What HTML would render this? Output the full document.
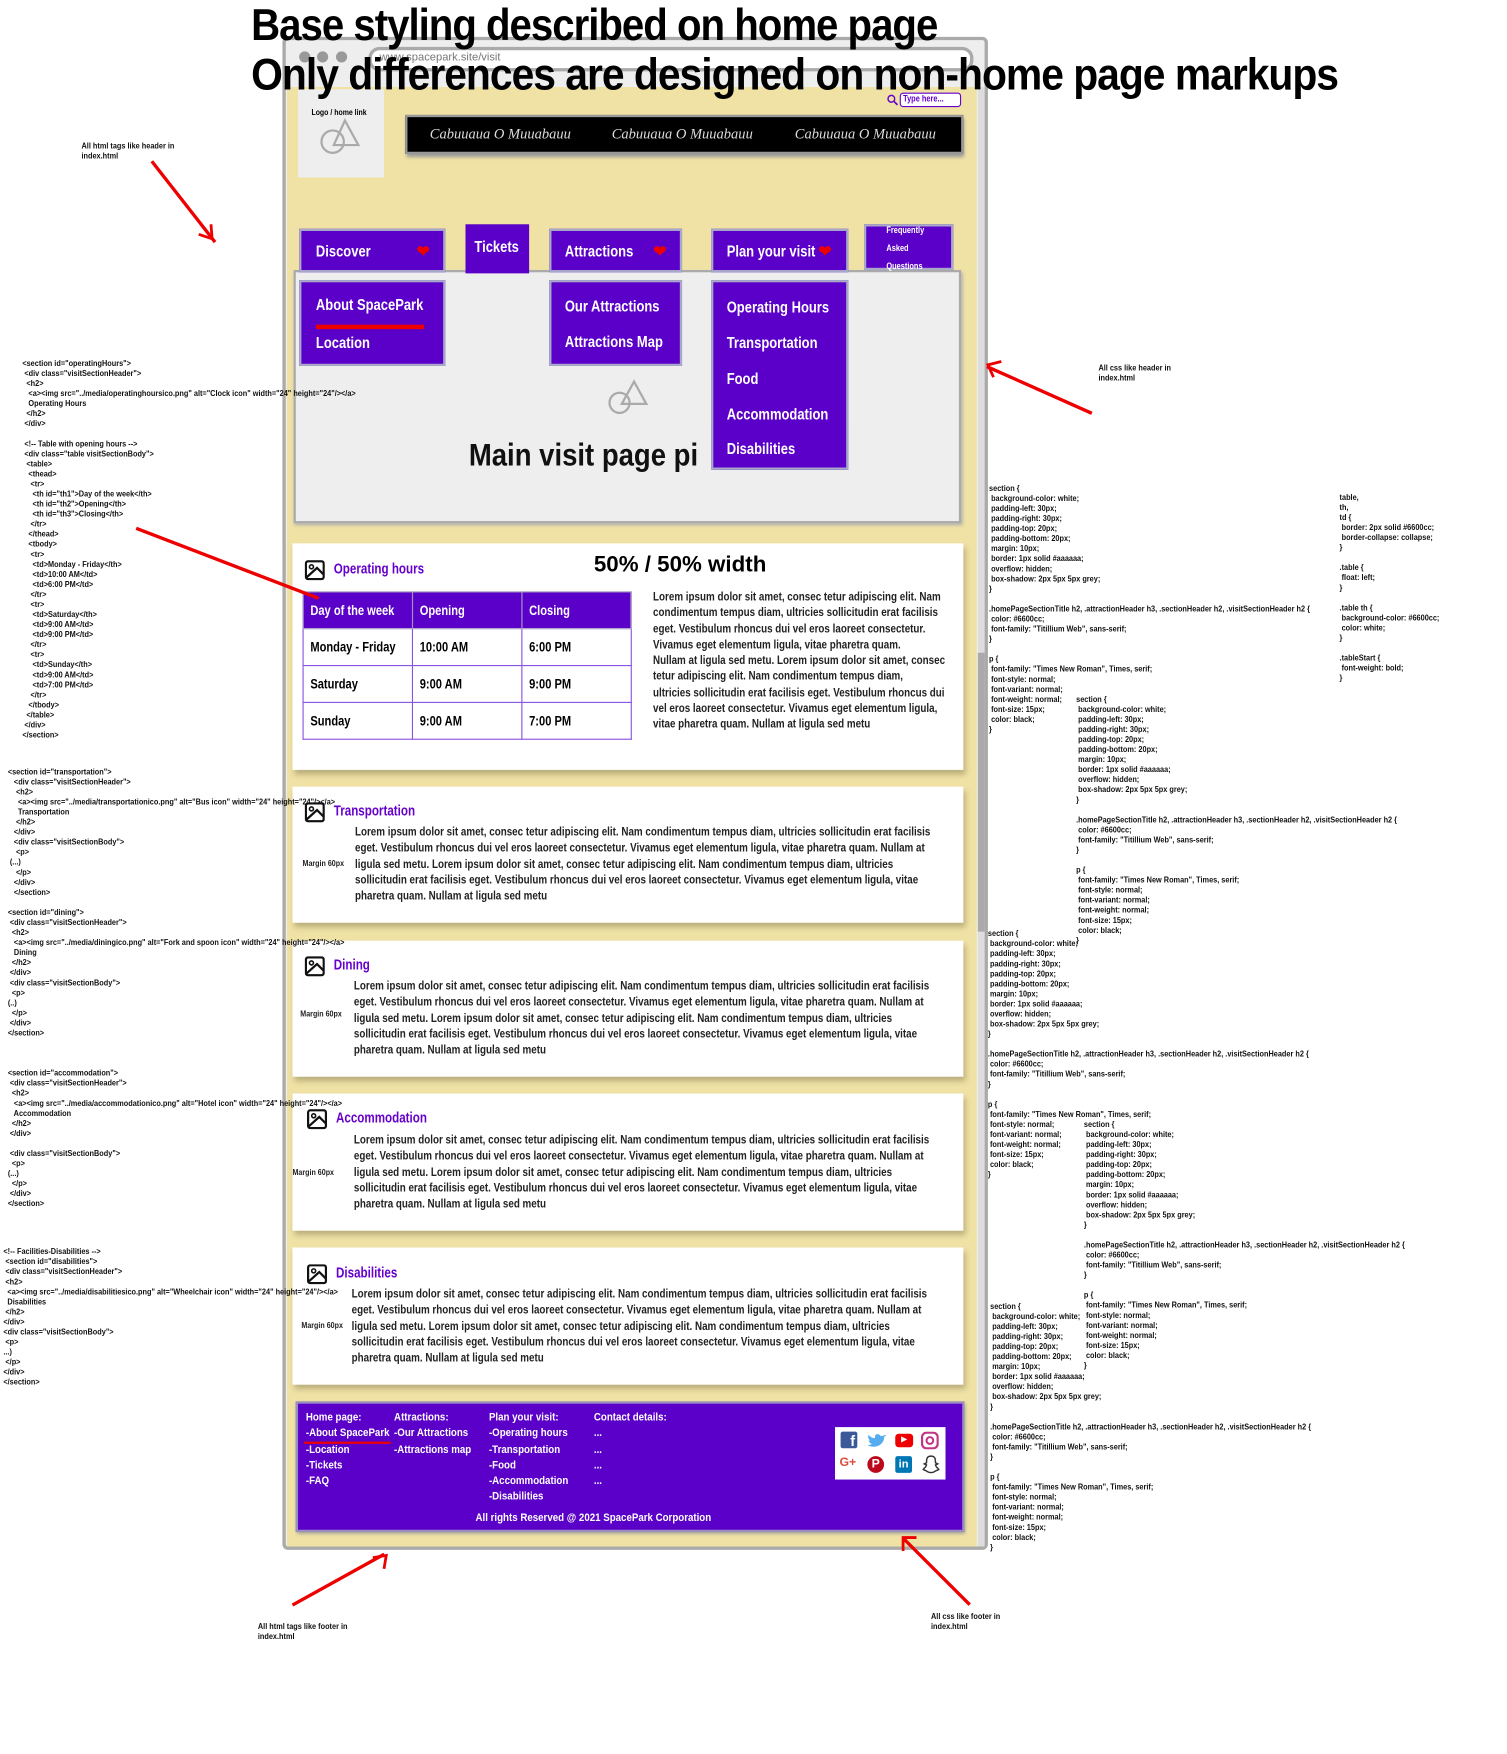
<!DOCTYPE html>
<html><head><meta charset="utf-8"><style>
*{margin:0;padding:0;box-sizing:border-box}
body{width:1507px;height:1754px;background:#fff;overflow:hidden;font-family:"Liberation Sans",sans-serif}
#r{position:absolute;left:0;top:0;width:1350px;height:1572px;transform:scale(1.1163,1.1158);transform-origin:0 0}
.a{position:absolute}
.c{display:inline-block;white-space:nowrap;transform:scaleX(.83);transform-origin:0 50%}
.nav{position:absolute;background:#5a00c8;color:#fff;border:2px solid #a8a8c8;font-size:14px;font-weight:bold;white-space:nowrap}
.sub{position:absolute;background:#5a00c8;color:#fff;border:2px solid #a8a8c8;font-size:14px;font-weight:bold;white-space:nowrap}
.sec{position:absolute;left:262px;width:601px;background:#fff;box-shadow:2px 4px 5px #b9ad7a}
.h2{position:absolute;color:#6600cc;font-size:13px;font-weight:bold;white-space:nowrap;transform:scaleX(.8);transform-origin:0 0}
.p{position:absolute;font-size:11px;line-height:14.3px;color:#222;font-weight:bold;white-space:nowrap;transform:scaleX(.8);transform-origin:0 0}
.ic{position:absolute}
.code{position:absolute;font-size:7.3px;line-height:9px;color:#111;white-space:pre;font-weight:bold;transform:scaleX(.9);transform-origin:0 0}
.mg{position:absolute;font-size:7.5px;font-weight:bold;color:#222;transform:scaleX(.85);transform-origin:0 0;white-space:nowrap}
table{position:absolute;left:271px;top:530px;border-collapse:collapse;font-size:12px;font-weight:bold;table-layout:fixed;width:294px}
td,th{border:1.5px solid #8a50e0;height:33px;padding-left:6px;text-align:left;width:98px;white-space:nowrap;overflow:hidden}
th{background:#5a00c8;color:#fff;border-color:#a090c0}
.ft{position:absolute;color:#fff;font-size:10px;font-weight:bold;line-height:14.3px;white-space:nowrap;transform:scaleX(.87);transform-origin:0 0}
.arrow{position:absolute;height:3px;background:#e00;transform-origin:0 50%}
</style></head><body><div id="r">

<div class="a" style="left:253px;top:33px;width:632px;height:1356px;border:3px solid #aaa;border-radius:5px;background:#eee"></div>
<div class="a" style="left:268px;top:46px;width:10px;height:10px;border-radius:50%;background:#999"></div>
<div class="a" style="left:284px;top:46px;width:10px;height:10px;border-radius:50%;background:#999"></div>
<div class="a" style="left:301px;top:46px;width:10px;height:10px;border-radius:50%;background:#999"></div>
<div class="a" style="left:330px;top:42px;width:542px;height:22px;border:3px solid #aaa;border-radius:10px;background:#fff"></div>
<div class="a" style="left:340px;top:46px;font-size:10px;color:#777">www.spacepark.site/visit</div>
<div class="a" style="left:257px;top:78px;width:618px;height:1308px;background:#f0e2a5"></div>
<div class="a" style="left:876px;top:78px;width:6px;height:1308px;background:#ddd"></div>
<div class="a" style="left:876px;top:585px;width:6px;height:250px;background:#aaa"></div>

<div class="a" style="left:267px;top:80px;width:77px;height:79px;background:#eee"></div>
<div class="a" style="left:279px;top:96px;font-size:7.5px;font-weight:bold"><span class="c">Logo / home link</span></div>
<svg class="a" style="left:285px;top:105px" width="40" height="35"><circle cx="13" cy="22" r="10" fill="none" stroke="#aaa" stroke-width="2"/><path d="M24 3 L36 25 L14 25 Z" fill="none" stroke="#aaa" stroke-width="2"/></svg>
<svg class="a" style="left:794px;top:84px" width="11" height="11"><circle cx="4.5" cy="4.5" r="3" fill="none" stroke="#6600cc" stroke-width="1.3"/><path d="M7 7 L10 10" stroke="#6600cc" stroke-width="1.5"/></svg>
<div class="a" style="left:806px;top:83px;width:55px;height:13px;border:1.5px solid #6600cc;border-radius:3px;background:#fff;font-size:8px;color:#6600cc;font-weight:bold;padding-left:2px;line-height:10px"><span class="c">Type here...</span></div>
<div class="a" style="left:363px;top:103px;width:500px;height:35px;background:#000;border:2px solid #999;box-shadow:1px 3px 3px #999;color:#ddd;font-family:'Liberation Serif',serif;font-style:italic;font-size:13px;line-height:30px"><span class="a" style="left:20px">Cabuuaua O Muuabauu</span><span class="a" style="left:183px">Cabuuaua O Muuabauu</span><span class="a" style="left:347px">Cabuuaua O Muuabauu</span></div>

<div class="a" style="left:225px;top:0px;font-size:40px;font-weight:bold;line-height:46px;letter-spacing:-1px;color:#000;white-space:nowrap;transform:scaleX(.9);transform-origin:0 0">Base styling described on home page</div>
<div class="a" style="left:225px;top:44px;font-size:40px;font-weight:bold;line-height:46px;letter-spacing:-1px;color:#000;white-space:nowrap;transform:scaleX(.915);transform-origin:0 0">Only differences are designed on non-home page markups</div>

<div class="a" style="left:263px;top:242px;width:598px;height:227px;background:#eee;border:2px solid #aaa;box-shadow:1px 2px 3px #aaa"></div>
<div class="nav" style="left:268px;top:205px;width:131px;height:39px;padding:10px 13px"><span class="c">Discover</span><span style="position:absolute;right:12px;color:#e00">&#10084;</span></div>
<div class="nav" style="left:417px;top:201px;width:57px;height:44px;padding:12px 8px;border:none"><span class="c">Tickets</span></div>
<div class="nav" style="left:492px;top:205px;width:119px;height:39px;padding:10px 12px"><span class="c">Attractions</span><span style="position:absolute;right:12px;color:#e00">&#10084;</span></div>
<div class="nav" style="left:637px;top:205px;width:123px;height:39px;padding:10px 12px"><span class="c">Plan your visit</span><span style="position:absolute;right:13px;color:#e00">&#10084;</span></div>
<div class="nav" style="left:774px;top:201px;width:80px;height:41px;font-size:8px;line-height:16px;padding-left:18px">
<div style="margin-top:-4px"><span class="c">Frequently</span></div><div><span class="c">Asked</span></div><div><span class="c">Questions</span></div></div>

<div class="sub" style="left:268px;top:251px;width:131px;height:77px;padding:10px 13px"><div style="line-height:20px"><span class="c">About SpacePark</span></div><div style="margin:8px 0 0 0;width:97px;height:4px;background:#e00"></div><div style="line-height:24px"><span class="c">Location</span></div></div>
<div class="sub" style="left:492px;top:251px;width:119px;height:77px;padding:5px 12px;line-height:32px"><span class="c">Our Attractions</span><br><span class="c">Attractions Map</span></div>
<div class="sub" style="left:637px;top:251px;width:123px;height:170px;padding:6px 12px;line-height:32px"><span class="c">Operating Hours</span><br><span class="c">Transportation</span><br><span class="c">Food</span><br><span class="c">Accommodation</span><br><span class="c">Disabilities</span></div>
<svg class="a" style="left:543px;top:340px" width="40" height="35"><circle cx="12" cy="21" r="9" fill="none" stroke="#aaa" stroke-width="2"/><path d="M25 2 L36 22 L14 22 Z" fill="none" stroke="#aaa" stroke-width="2"/></svg>
<div class="a" style="left:420px;top:392px;font-size:28px;font-weight:bold;color:#111;white-space:nowrap;transform:scaleX(.88);transform-origin:0 0">Main visit page pi</div>
<div class="sub" style="left:637px;top:380px;width:123px;height:41px;padding:6px 12px;line-height:32px;border-top:none"><span class="c">Disabilities</span></div>

<div class="sec" style="top:487px;height:203px"></div>
<svg class="ic" style="left:273px;top:502px" width="18" height="18"><rect x="1" y="1" width="16" height="16" rx="2" fill="none" stroke="#111" stroke-width="2"/><circle cx="6" cy="6" r="1.8" fill="none" stroke="#111" stroke-width="1.4"/><path d="M1 16 L11 7 L17 13" fill="none" stroke="#111" stroke-width="2"/></svg>
<div class="h2" style="left:299px;top:502px">Operating hours</div>
<div class="a" style="left:532px;top:495px;font-size:20px;font-weight:bold;white-space:nowrap">50% / 50% width</div>
<table><tr><th><span class="c">Day of the week</span></th><th><span class="c">Opening</span></th><th><span class="c">Closing</span></th></tr>
<tr><td><span class="c">Monday - Friday</span></td><td><span class="c">10:00 AM</span></td><td><span class="c">6:00 PM</span></td></tr>
<tr><td><span class="c">Saturday</span></td><td><span class="c">9:00 AM</span></td><td><span class="c">9:00 PM</span></td></tr>
<tr><td><span class="c">Sunday</span></td><td><span class="c">9:00 AM</span></td><td><span class="c">7:00 PM</span></td></tr></table>
<div class="p" style="left:585px;top:528px">Lorem ipsum dolor sit amet, consec tetur adipiscing elit. Nam<br>condimentum tempus diam, ultricies sollicitudin erat facilisis<br>eget. Vestibulum rhoncus dui vel eros laoreet consectetur.<br>Vivamus eget elementum ligula, vitae pharetra quam.<br>Nullam at ligula sed metu. Lorem ipsum dolor sit amet, consec<br>tetur adipiscing elit. Nam condimentum tempus diam,<br>ultricies sollicitudin erat facilisis eget. Vestibulum rhoncus dui<br>vel eros laoreet consectetur. Vivamus eget elementum ligula,<br>vitae pharetra quam. Nullam at ligula sed metu</div>

<div class="sec" style="top:705px;height:122px"></div>
<svg class="ic" style="left:273px;top:719px" width="18" height="18"><rect x="1" y="1" width="16" height="16" rx="2" fill="none" stroke="#111" stroke-width="2"/><circle cx="6" cy="6" r="1.8" fill="none" stroke="#111" stroke-width="1.4"/><path d="M1 16 L11 7 L17 13" fill="none" stroke="#111" stroke-width="2"/></svg>
<div class="h2" style="left:299px;top:719px">Transportation</div>
<div class="mg" style="left:271px;top:769px">Margin 60px</div>
<div class="p" style="left:318px;top:739px">Lorem ipsum dolor sit amet, consec tetur adipiscing elit. Nam condimentum tempus diam, ultricies sollicitudin erat facilisis<br>eget. Vestibulum rhoncus dui vel eros laoreet consectetur. Vivamus eget elementum ligula, vitae pharetra quam. Nullam at<br>ligula sed metu. Lorem ipsum dolor sit amet, consec tetur adipiscing elit. Nam condimentum tempus diam, ultricies<br>sollicitudin erat facilisis eget. Vestibulum rhoncus dui vel eros laoreet consectetur. Vivamus eget elementum ligula, vitae<br>pharetra quam. Nullam at ligula sed metu</div>

<div class="sec" style="top:843px;height:122px"></div>
<svg class="ic" style="left:273px;top:857px" width="18" height="18"><rect x="1" y="1" width="16" height="16" rx="2" fill="none" stroke="#111" stroke-width="2"/><circle cx="6" cy="6" r="1.8" fill="none" stroke="#111" stroke-width="1.4"/><path d="M1 16 L11 7 L17 13" fill="none" stroke="#111" stroke-width="2"/></svg>
<div class="h2" style="left:299px;top:857px">Dining</div>
<div class="mg" style="left:269px;top:904px">Margin 60px</div>
<div class="p" style="left:317px;top:877px">Lorem ipsum dolor sit amet, consec tetur adipiscing elit. Nam condimentum tempus diam, ultricies sollicitudin erat facilisis<br>eget. Vestibulum rhoncus dui vel eros laoreet consectetur. Vivamus eget elementum ligula, vitae pharetra quam. Nullam at<br>ligula sed metu. Lorem ipsum dolor sit amet, consec tetur adipiscing elit. Nam condimentum tempus diam, ultricies<br>sollicitudin erat facilisis eget. Vestibulum rhoncus dui vel eros laoreet consectetur. Vivamus eget elementum ligula, vitae<br>pharetra quam. Nullam at ligula sed metu</div>

<div class="sec" style="top:980px;height:123px"></div>
<svg class="ic" style="left:275px;top:994px" width="18" height="18"><rect x="1" y="1" width="16" height="16" rx="2" fill="none" stroke="#111" stroke-width="2"/><circle cx="6" cy="6" r="1.8" fill="none" stroke="#111" stroke-width="1.4"/><path d="M1 16 L11 7 L17 13" fill="none" stroke="#111" stroke-width="2"/></svg>
<div class="h2" style="left:301px;top:994px">Accommodation</div>
<div class="mg" style="left:262px;top:1046px">Margin 60px</div>
<div class="p" style="left:317px;top:1015px">Lorem ipsum dolor sit amet, consec tetur adipiscing elit. Nam condimentum tempus diam, ultricies sollicitudin erat facilisis<br>eget. Vestibulum rhoncus dui vel eros laoreet consectetur. Vivamus eget elementum ligula, vitae pharetra quam. Nullam at<br>ligula sed metu. Lorem ipsum dolor sit amet, consec tetur adipiscing elit. Nam condimentum tempus diam, ultricies<br>sollicitudin erat facilisis eget. Vestibulum rhoncus dui vel eros laoreet consectetur. Vivamus eget elementum ligula, vitae<br>pharetra quam. Nullam at ligula sed metu</div>

<div class="sec" style="top:1118px;height:123px"></div>
<svg class="ic" style="left:275px;top:1133px" width="18" height="18"><rect x="1" y="1" width="16" height="16" rx="2" fill="none" stroke="#111" stroke-width="2"/><circle cx="6" cy="6" r="1.8" fill="none" stroke="#111" stroke-width="1.4"/><path d="M1 16 L11 7 L17 13" fill="none" stroke="#111" stroke-width="2"/></svg>
<div class="h2" style="left:301px;top:1133px">Disabilities</div>
<div class="mg" style="left:270px;top:1183px">Margin 60px</div>
<div class="p" style="left:315px;top:1153px">Lorem ipsum dolor sit amet, consec tetur adipiscing elit. Nam condimentum tempus diam, ultricies sollicitudin erat facilisis<br>eget. Vestibulum rhoncus dui vel eros laoreet consectetur. Vivamus eget elementum ligula, vitae pharetra quam. Nullam at<br>ligula sed metu. Lorem ipsum dolor sit amet, consec tetur adipiscing elit. Nam condimentum tempus diam, ultricies<br>sollicitudin erat facilisis eget. Vestibulum rhoncus dui vel eros laoreet consectetur. Vivamus eget elementum ligula, vitae<br>pharetra quam. Nullam at ligula sed metu</div>

<div class="a" style="left:265px;top:1256px;width:599px;height:117px;background:#5a00c8;border:2px solid #9a90c0;box-shadow:1px 2px 3px #999"></div>
<div class="ft" style="left:274px;top:1264px">Home page:<br>-About SpacePark<br>-Location<br>-Tickets<br>-FAQ</div>
<div class="a" style="left:272px;top:1292px;width:78px;height:2px;background:#e00"></div>
<div class="ft" style="left:353px;top:1264px">Attractions:<br>-Our Attractions<br>-Attractions map</div>
<div class="ft" style="left:438px;top:1264px">Plan your visit:<br>-Operating hours<br>-Transportation<br>-Food<br>-Accommodation<br>-Disabilities</div>
<div class="ft" style="left:532px;top:1264px">Contact details:<br>...<br>...<br>...<br>...</div>
<div class="ft" style="left:426px;top:1354px">All rights Reserved @ 2021 SpacePark Corporation</div>
<div class="a" style="left:748px;top:1279px;width:99px;height:47px;background:#fff"></div>
<div class="a" style="left:753px;top:1283px;width:15px;height:15px;background:#3b5998;border-radius:2px;color:#fff;font-size:13px;font-weight:bold;text-align:right;line-height:18px;padding-right:2px">f</div>
<svg class="a" style="left:777px;top:1284px" width="17" height="14"><path d="M16 2 C14 3 13 3 12 3 C10 0 6 1 7 5 C4 5 2 3 1 2 C0 5 2 7 3 7 C2 7 2 7 1 7 C2 9 3 10 4 10 C3 11 1 11 0 11 C7 15 15 11 15 4 L17 2 Z" fill="#55acee"/></svg>
<div class="a" style="left:802px;top:1285px;width:16px;height:12px;background:#e00;border-radius:3px;color:#fff;font-size:7px;text-align:center;line-height:12px">&#9654;</div>
<svg class="a" style="left:825px;top:1283px" width="16" height="16"><rect x="1" y="1" width="14" height="14" rx="4" fill="none" stroke="#c13584" stroke-width="2"/><circle cx="8" cy="8" r="3" fill="none" stroke="#c13584" stroke-width="1.8"/></svg>
<div class="a" style="left:752px;top:1305px;color:#dd4b39;font-size:11px;font-weight:bold">G+</div>
<div class="a" style="left:777px;top:1305px;width:15px;height:15px;background:#bd081c;border-radius:50%;color:#fff;font-size:11px;text-align:center;line-height:15px;font-weight:bold">P</div>
<div class="a" style="left:802px;top:1305px;width:15px;height:15px;background:#0077b5;border-radius:2px;color:#fff;font-size:10px;text-align:center;line-height:15px;font-weight:bold">in</div>
<svg class="a" style="left:826px;top:1304px" width="16" height="17"><path d="M8 1 C4 1 4 4 4 7 L2 8 L4 9 C3 12 1 12 1 13 C3 14 4 14 5 15 C7 16 9 16 11 15 C12 14 13 14 15 13 C15 12 13 12 12 9 L14 8 L12 7 C12 4 12 1 8 1 Z" fill="none" stroke="#333" stroke-width="1.3"/></svg>

<div class="code" style="left:73px;top:126px">All html tags like header in
index.html</div>
<div class="arrow" style="left:136px;top:143px;width:92px;transform:rotate(52deg)"></div>
<svg class="a" style="left:176px;top:198px" width="16" height="18"><path d="M2 12 L14 16 L13 3" fill="none" stroke="#e00" stroke-width="2.5"/></svg>
<div class="code" style="left:984px;top:325px">All css like header in
index.html</div>
<div class="arrow" style="left:884px;top:327px;width:103px;transform:rotate(24deg)"></div>
<svg class="a" style="left:883px;top:322px" width="18" height="18"><path d="M14 2 L2 5 L7 16" fill="none" stroke="#e00" stroke-width="2.5"/></svg>
<div class="arrow" style="left:122px;top:472px;width:175px;transform:rotate(21deg)"></div>
<div class="arrow" style="left:262px;top:1437px;width:94px;transform:rotate(-29deg)"></div>
<svg class="a" style="left:332px;top:1392px" width="18" height="18"><path d="M2 4 L14 2 L12 14" fill="none" stroke="#e00" stroke-width="2.5"/></svg>
<div class="code" style="left:231px;top:1453px">All html tags like footer in
index.html</div>
<div class="arrow" style="left:810px;top:1378px;width:83px;transform:rotate(45deg)"></div>
<svg class="a" style="left:806px;top:1375px" width="18" height="18"><path d="M3 15 L3 3 L15 3" fill="none" stroke="#e00" stroke-width="2.5"/></svg>
<div class="code" style="left:834px;top:1444px">All css like footer in
index.html</div>

<div class="code" style="left:20px;top:321px">&lt;section id="operatingHours"&gt;
 &lt;div class="visitSectionHeader"&gt;
  &lt;h2&gt;
   &lt;a&gt;&lt;img src="../media/operatinghoursico.png" alt="Clock icon" width="24" height="24"/&gt;&lt;/a&gt;
   Operating Hours
  &lt;/h2&gt;
 &lt;/div&gt;

 &lt;!-- Table with opening hours --&gt;
 &lt;div class="table visitSectionBody"&gt;
  &lt;table&gt;
   &lt;thead&gt;
    &lt;tr&gt;
     &lt;th id="th1"&gt;Day of the week&lt;/th&gt;
     &lt;th id="th2"&gt;Opening&lt;/th&gt;
     &lt;th id="th3"&gt;Closing&lt;/th&gt;
    &lt;/tr&gt;
   &lt;/thead&gt;
   &lt;tbody&gt;
    &lt;tr&gt;
     &lt;td&gt;Monday - Friday&lt;/th&gt;
     &lt;td&gt;10:00 AM&lt;/td&gt;
     &lt;td&gt;6:00 PM&lt;/td&gt;
    &lt;/tr&gt;
    &lt;tr&gt;
     &lt;td&gt;Saturday&lt;/th&gt;
     &lt;td&gt;9:00 AM&lt;/td&gt;
     &lt;td&gt;9:00 PM&lt;/td&gt;
    &lt;/tr&gt;
    &lt;tr&gt;
     &lt;td&gt;Sunday&lt;/th&gt;
     &lt;td&gt;9:00 AM&lt;/td&gt;
     &lt;td&gt;7:00 PM&lt;/td&gt;
    &lt;/tr&gt;
   &lt;/tbody&gt;
  &lt;/table&gt;
 &lt;/div&gt;
&lt;/section&gt;</div>

<div class="code" style="left:7px;top:687px">&lt;section id="transportation"&gt;
   &lt;div class="visitSectionHeader"&gt;
    &lt;h2&gt;
     &lt;a&gt;&lt;img src="../media/transportationico.png" alt="Bus icon" width="24" height="24"/&gt;&lt;/a&gt;
     Transportation
    &lt;/h2&gt;
   &lt;/div&gt;
   &lt;div class="visitSectionBody"&gt;
    &lt;p&gt;
 (...)
    &lt;/p&gt;
   &lt;/div&gt;
   &lt;/section&gt;

&lt;section id="dining"&gt;
 &lt;div class="visitSectionHeader"&gt;
  &lt;h2&gt;
   &lt;a&gt;&lt;img src="../media/diningico.png" alt="Fork and spoon icon" width="24" height="24"/&gt;&lt;/a&gt;
   Dining
  &lt;/h2&gt;
 &lt;/div&gt;
 &lt;div class="visitSectionBody"&gt;
  &lt;p&gt;
(..)
  &lt;/p&gt;
 &lt;/div&gt;
&lt;/section&gt;



&lt;section id="accommodation"&gt;
 &lt;div class="visitSectionHeader"&gt;
  &lt;h2&gt;
   &lt;a&gt;&lt;img src="../media/accommodationico.png" alt="Hotel icon" width="24" height="24"/&gt;&lt;/a&gt;
   Accommodation
  &lt;/h2&gt;
 &lt;/div&gt;

 &lt;div class="visitSectionBody"&gt;
  &lt;p&gt;
(...)
  &lt;/p&gt;
 &lt;/div&gt;
&lt;/section&gt;</div>

<div class="code" style="left:3px;top:1117px">&lt;!-- Facilities-Disabilities --&gt;
 &lt;section id="disabilities"&gt;
 &lt;div class="visitSectionHeader"&gt;
 &lt;h2&gt;
  &lt;a&gt;&lt;img src="../media/disabilitiesico.png" alt="Wheelchair icon" width="24" height="24"/&gt;&lt;/a&gt;
  Disabilities
 &lt;/h2&gt;
&lt;/div&gt;
&lt;div class="visitSectionBody"&gt;
 &lt;p&gt;
...)
 &lt;/p&gt;
&lt;/div&gt;
&lt;/section&gt;</div>

<div class="code" style="left:886px;top:433px">section {
 background-color: white;
 padding-left: 30px;
 padding-right: 30px;
 padding-top: 20px;
 padding-bottom: 20px;
 margin: 10px;
 border: 1px solid #aaaaaa;
 overflow: hidden;
 box-shadow: 2px 5px 5px grey;
}

.homePageSectionTitle h2, .attractionHeader h3, .sectionHeader h2, .visitSectionHeader h2 {
 color: #6600cc;
 font-family: "Titillium Web", sans-serif;
}

p {
 font-family: "Times New Roman", Times, serif;
 font-style: normal;
 font-variant: normal;
 font-weight: normal;
 font-size: 15px;
 color: black;
}</div>
<div class="code" style="left:964px;top:622px">section {
 background-color: white;
 padding-left: 30px;
 padding-right: 30px;
 padding-top: 20px;
 padding-bottom: 20px;
 margin: 10px;
 border: 1px solid #aaaaaa;
 overflow: hidden;
 box-shadow: 2px 5px 5px grey;
}

.homePageSectionTitle h2, .attractionHeader h3, .sectionHeader h2, .visitSectionHeader h2 {
 color: #6600cc;
 font-family: "Titillium Web", sans-serif;
}

p {
 font-family: "Times New Roman", Times, serif;
 font-style: normal;
 font-variant: normal;
 font-weight: normal;
 font-size: 15px;
 color: black;
}</div>
<div class="code" style="left:1200px;top:441px">table,
th,
td {
 border: 2px solid #6600cc;
 border-collapse: collapse;
}

.table {
 float: left;
}

.table th {
 background-color: #6600cc;
 color: white;
}

.tableStart {
 font-weight: bold;
}</div>
<div class="code" style="left:885px;top:832px">section {
 background-color: white;
 padding-left: 30px;
 padding-right: 30px;
 padding-top: 20px;
 padding-bottom: 20px;
 margin: 10px;
 border: 1px solid #aaaaaa;
 overflow: hidden;
 box-shadow: 2px 5px 5px grey;
}

.homePageSectionTitle h2, .attractionHeader h3, .sectionHeader h2, .visitSectionHeader h2 {
 color: #6600cc;
 font-family: "Titillium Web", sans-serif;
}

p {
 font-family: "Times New Roman", Times, serif;
 font-style: normal;
 font-variant: normal;
 font-weight: normal;
 font-size: 15px;
 color: black;
}</div>
<div class="code" style="left:971px;top:1003px">section {
 background-color: white;
 padding-left: 30px;
 padding-right: 30px;
 padding-top: 20px;
 padding-bottom: 20px;
 margin: 10px;
 border: 1px solid #aaaaaa;
 overflow: hidden;
 box-shadow: 2px 5px 5px grey;
}

.homePageSectionTitle h2, .attractionHeader h3, .sectionHeader h2, .visitSectionHeader h2 {
 color: #6600cc;
 font-family: "Titillium Web", sans-serif;
}

p {
 font-family: "Times New Roman", Times, serif;
 font-style: normal;
 font-variant: normal;
 font-weight: normal;
 font-size: 15px;
 color: black;
}</div>
<div class="code" style="left:887px;top:1166px">section {
 background-color: white;
 padding-left: 30px;
 padding-right: 30px;
 padding-top: 20px;
 padding-bottom: 20px;
 margin: 10px;
 border: 1px solid #aaaaaa;
 overflow: hidden;
 box-shadow: 2px 5px 5px grey;
}

.homePageSectionTitle h2, .attractionHeader h3, .sectionHeader h2, .visitSectionHeader h2 {
 color: #6600cc;
 font-family: "Titillium Web", sans-serif;
}

p {
 font-family: "Times New Roman", Times, serif;
 font-style: normal;
 font-variant: normal;
 font-weight: normal;
 font-size: 15px;
 color: black;
}</div>

</div></body></html>
